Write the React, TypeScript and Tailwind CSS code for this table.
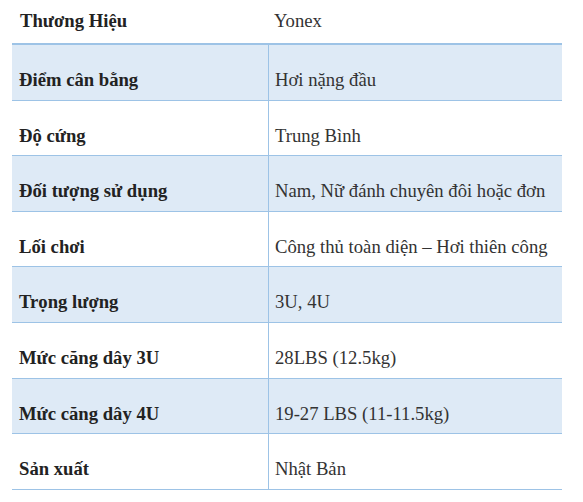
const specs = [
  { label: "Điểm cân bằng", value: "Hơi nặng đầu" },
  { label: "Độ cứng", value: "Trung Bình" },
  { label: "Đối tượng sử dụng", value: "Nam, Nữ đánh chuyên đôi hoặc đơn" },
  { label: "Lối chơi", value: "Công thủ toàn diện – Hơi thiên công" },
  { label: "Trọng lượng", value: "3U, 4U" },
  { label: "Mức căng dây 3U", value: "28LBS (12.5kg)" },
  { label: "Mức căng dây 4U", value: "19-27 LBS (11-11.5kg)" },
  { label: "Sản xuất", value: "Nhật Bản" },
];

export default function App() {
  return (
    <div
      className="min-h-screen bg-white text-[18.67px] leading-[21.6px] text-[#222]"
      style={{ fontFamily: '"Liberation Serif", "Times New Roman", serif' }}
    >
      <div className="ml-[12px] w-[550px]">
        {/* header row, no side lines */}
        <div className="flex h-[45px] border-b-2 border-[#9dc3e6]">
          <div className="w-[256px] pl-[8px] pt-[10px] font-bold">Thương Hiệu</div>
          <div className="flex-1 pl-[6px] pt-[10px] text-[#333]">Yonex</div>
        </div>

        {specs.map((row, i) => (
          <div
            key={row.label}
            className={`flex border-b border-[#9dc3e6] ${i % 2 === 0 ? "bg-[#deeaf6]" : "bg-white"}`}
          >
            <div className="w-[256px] pl-[7px] pt-[24px] pb-[9px] font-bold">{row.label}</div>
            <div className="flex-1 border-l border-[#9dc3e6] pl-[6px] pt-[24px] pb-[9px] text-[#333]">
              {row.value}
            </div>
          </div>
        ))}
      </div>
    </div>
  );
}
